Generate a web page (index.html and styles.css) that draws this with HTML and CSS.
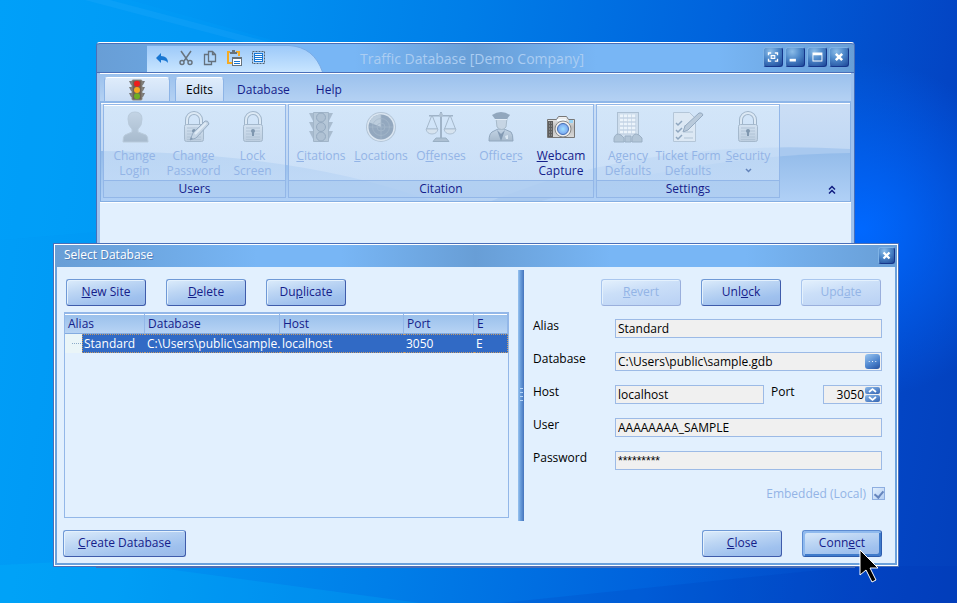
FILE: index.html
```html
<!DOCTYPE html>
<html lang="en">
<head>
<meta charset="utf-8">
<title>Traffic Database</title>
<link rel="stylesheet" href="styles.css">
</head>
<body>
<svg width="0" height="0" class="defs" aria-hidden="true">
  <defs>
    <linearGradient id="silver" x1="0" y1="0" x2="0" y2="1"><stop offset="0" stop-color="#c3d4e5"/><stop offset="1" stop-color="#a7bacd"/></linearGradient>
    <linearGradient id="pale" x1="0" y1="0" x2="0" y2="1"><stop offset="0" stop-color="#d3e2f1"/><stop offset="1" stop-color="#bccddf"/></linearGradient>
    <linearGradient id="metal" x1="0" y1="0" x2="0" y2="1"><stop offset="0" stop-color="#f4f4f4"/><stop offset=".5" stop-color="#bdbdbd"/><stop offset="1" stop-color="#d9d9d9"/></linearGradient>
    <radialGradient id="lens"><stop offset="0" stop-color="#9fe0ff"/><stop offset="1" stop-color="#79a4f0"/></radialGradient>
    <symbol id="i-lock" viewBox="0 0 32 32">
      <path d="M9 14V9a7 7 0 0 1 14 0v5" fill="none" stroke="#9fb4c9" stroke-width="4"/>
      <path d="M9 14V9a7 7 0 0 1 14 0v5" fill="none" stroke="#dce9f5" stroke-width="2"/>
      <rect x="6.500" y="13.500" width="19" height="17" rx="2" fill="url(#pale)" stroke="#a5b9cd"/>
      <path d="M9 17h14M9 20h14M9 23h14M9 26h14M9 28.500h14" stroke="#b0c3d6"/>
      <circle cx="16" cy="20" r="2" fill="#7f97af"/><path d="M15 20h2v5h-2z" fill="#7f97af"/>
    </symbol>
    <symbol id="i-pen" viewBox="0 0 32 32">
      <path d="M12 29l3-7L27 10q3-1 4 3L18 27z" fill="#c5d5e5" stroke="#96acc3"/><path d="M17 23L28 12" stroke="#e0ebf6" stroke-width="2"/><path d="M12 29l1-3 2 2z" fill="#8399b1"/>
    </symbol>
  </defs>
</svg>

<main class="desktop">
  <svg class="beams" viewBox="0 0 957 603" preserveAspectRatio="none" aria-hidden="true">
    <path d="M0 0H130L300 48 720 180 0 240z" fill="#00a8ff" opacity=".16"/>
    <path d="M110 0L280 45H255L85 0z" fill="#4fc0ff" opacity=".12"/>
    <path d="M0 565L100 560 420 603H0z" fill="#00c0ff" opacity=".18"/>
    <path d="M500 603L860 566H957V603z" fill="#0030b0" opacity=".14"/>
  </svg>

  <section class="window app" aria-label="Traffic Database">
    <header class="titlebar">
      <div class="quick">
        <svg class="quick-shape" viewBox="0 0 176 27" preserveAspectRatio="none" aria-hidden="true"><defs><linearGradient id="qa" x1="0" y1="0" x2="0" y2="1"><stop offset="0" stop-color="#9cc9f9"/><stop offset="1" stop-color="#c8e5ff"/></linearGradient></defs><path d="M0 .500H142Q167 2 175.500 27H0z" fill="url(#qa)"/><path d="M0 .500H142Q167 2 175.500 27" fill="none" stroke="#79abe5"/></svg>
        <button type="button" aria-label="Undo"><svg viewBox="0 0 16 16"><path d="M2 8L7 3v3q7 0 7 7-2-3-7-3v3z" fill="#1876d2"/></svg></button>
        <button type="button" aria-label="Cut"><svg viewBox="0 0 16 16" fill="none" stroke="#68747f" stroke-width="1.500"><path d="M3 1l7 10M13 1L6 11"/><circle cx="4" cy="12.500" r="2"/><circle cx="12" cy="12.500" r="2"/></svg></button>
        <button type="button" aria-label="Copy"><svg viewBox="0 0 16 16" fill="none" stroke="#65717d" stroke-width="1.300"><path d="M6.500 1.500h4l3 3v7h-7zM10.500 1.500v3h3M6.500 4.500h-4v10h7v-3"/></svg></button>
        <button type="button" aria-label="Paste"><svg viewBox="0 0 16 16"><path d="M4 2H2v11h4M10 2h3v4" fill="none" stroke="#f5ab24" stroke-width="2"/><path d="M4 2h2V0h3v2h2v2H4z" fill="#66727d"/><rect x="6.500" y="7.500" width="9" height="8" fill="#fff" stroke="#66727d"/><path d="M6 7h10v2H6z" fill="#66727d"/><path d="M8 11.500h6M8 13.500h6" stroke="#1876d2"/></svg></button>
        <button type="button" aria-label="Select all"><svg viewBox="0 0 16 16"><rect x="2.500" y="1.500" width="12" height="12" fill="none" stroke="#53616f" stroke-dasharray="2 1"/><rect x="4" y="3" width="9" height="9" fill="#fff"/><path d="M4 3.500h9M4 5.500h9M4 7.500h9M4 9.500h9M4 11.500h9M4.500 3v9M12.500 3v9" stroke="#1876d2"/></svg></button>
      </div>
      <h1 class="app-title">Traffic Database [Demo Company]</h1>
      <div class="controls">
        <button type="button" class="ctl" aria-label="Full screen"><svg viewBox="0 0 20 20" fill="none" stroke="#fff" stroke-width="1.500"><path d="M5 8V5.500h3M12 5.500h3V8M5 12v2.500h3M12 14.500h3V12"/><path d="M8 8.500h4v3H8z" stroke-width="1.200"/></svg></button>
        <button type="button" class="ctl" aria-label="Minimize"><svg viewBox="0 0 20 20"><path d="M4 12h7v3H4z" fill="#fff"/></svg></button>
        <button type="button" class="ctl" aria-label="Maximize"><svg viewBox="0 0 20 20"><path d="M5 5h11v10H5zM6 8v6h9V8z" fill="#fff" fill-rule="evenodd"/></svg></button>
        <button type="button" class="ctl" aria-label="Close application"><svg viewBox="0 0 20 20"><path d="M6.500 6.500l7 7M13.500 6.500l-7 7" stroke="#fff" stroke-width="2.800"/></svg></button>
      </div>
    </header>

    <div class="frame">
      <nav class="tabs" aria-label="Ribbon tabs">
        <button type="button" class="tab lit app-tab" aria-label="Application menu"><svg viewBox="0 0 22 22"><path d="M3 2h16l-2 4H5zM3 8h16l-2 4H5zM3 14h16l-2 4H5z" fill="#777"/><rect x="6" y="1" width="10" height="20" rx="1" fill="#6e6259" stroke="#8b8b86"/><circle cx="11" cy="4.800" r="3" fill="#ef1c1c"/><circle cx="11" cy="11" r="3" fill="#f5a720"/><circle cx="11" cy="17.200" r="3" fill="#6dae25"/></svg></button>
        <button type="button" class="tab lit current">Edits</button>
        <button type="button" class="tab">Database</button>
        <button type="button" class="tab">Help</button>
      </nav>

      <div class="ribbon">
        <svg class="swoosh" viewBox="0 0 748 98" preserveAspectRatio="none" aria-hidden="true">
          <defs><linearGradient id="wave" x1="0" y1="0" x2="0" y2="1"><stop offset="0" stop-color="#94bcea"/><stop offset="1" stop-color="#b0d0f6"/></linearGradient></defs>
          <path d="M0 48Q200 50 330 98H0z" fill="url(#wave)"/>
          <path d="M390 98Q540 35 748 46V98z" fill="#a9c9ef"/>
          <path d="M440 98Q600 52 748 50V98z" fill="url(#wave)"/>
        </svg>
        <section class="group users" aria-label="Users">
          <div class="items">
            <button type="button" class="item" disabled><svg viewBox="0 0 32 32"><path d="M9 8q0-7 7-7t7 7-4 10v3l8 3q2 1 2 7H4q0-6 2-7l7-3v-3q-4-3-4-10z" fill="url(#silver)" stroke="#b9cbdc"/></svg><span>Change Login</span></button>
            <button type="button" class="item" disabled><svg viewBox="0 0 32 32"><use href="#i-lock"/><use href="#i-pen"/></svg><span>Change Password</span></button>
            <button type="button" class="item" disabled><svg viewBox="0 0 32 32"><use href="#i-lock"/></svg><span>Lock Screen</span></button>
          </div>
          <h2>Users</h2>
        </section>
        <section class="group citation" aria-label="Citation">
          <div class="items">
            <button type="button" class="item" disabled><svg viewBox="0 0 32 32"><path d="M4 2h24l-4 8H8zM4 11h24l-4 8H8zM4 20h24l-4 8H8z" fill="#a9bccf"/><path d="M8.500 1.500h15v29h-15z" fill="#b5c7d8" stroke="#a1b5c9"/><g fill="#afc1d3" stroke="#95aac0"><circle cx="16" cy="6.500" r="4.500"/><circle cx="16" cy="16" r="4.500"/><circle cx="16" cy="25.500" r="4.500"/></g></svg><span><u>C</u>itations</span></button>
            <button type="button" class="item" disabled><svg viewBox="0 0 32 32"><circle cx="16" cy="16" r="15" fill="#b3c5d7"/><circle cx="16" cy="16" r="14" fill="#dbe6f1"/><circle cx="16" cy="16" r="12.500" fill="#93a8bf"/><path d="M16 16L4.500 11.500A12.500 12.500 0 0 1 16 3.500z" fill="#bccddd"/><g fill="none" stroke="#a6b9cc" stroke-width=".7"><circle cx="16" cy="16" r="4"/><circle cx="16" cy="16" r="8.500"/><path d="M4 16h24M16 4v24"/></g></svg><span><u>L</u>ocations</span></button>
            <button type="button" class="item" disabled><svg viewBox="0 0 32 32"><path d="M15 1h2v26h-2zM4 4h24v1.500H4z" fill="#9fb3c8"/><path d="M7 4L1.500 18h11zM25 4l-5.500 14h11z" fill="none" stroke="#a5b8cb"/><path d="M1 18h12q-1 5-6 5t-6-5zM19 18h12q-1 5-6 5t-6-5z" fill="#d6e3ef" stroke="#a5b8cb" stroke-width=".8"/><path d="M11 27h10l3 3.500H8z" fill="#adc0d3" stroke="#99afc4"/><circle cx="16" cy="4" r="2" fill="#afc1d3"/></svg><span>O<u>f</u>fenses</span></button>
            <button type="button" class="item" disabled><svg viewBox="0 0 32 32"><path d="M4 30q0-7 3-9l6-3h6l7 3q2 2 2 9z" fill="url(#silver)" stroke="#91a7be"/><path d="M11 7h11l-1 9q-4 5-9 0z" fill="#c6d5e4" stroke="#a7baca"/><path d="M7 4q9-6 18 0l-3 4H10z" fill="#91a7be"/><path d="M10 8h12v1H10z" fill="#e0ebf5"/><path d="M12 19l4 4 4-4-4 11z" fill="#839ab3"/><path d="M20 25l3-1v4h-2z" fill="#dae7f3"/></svg><span>Office<u>r</u>s</span></button>
            <button type="button" class="item"><svg viewBox="0 0 32 32"><path d="M2.500 8.500h9l2-3h8l2 3h6v18h-27z" fill="url(#metal)" stroke="#777"/><path d="M3 10h5v16H3z" fill="#5e5e5e"/><path d="M4 12h3M4 15h3M4 18h3M4 21h3M4 24h3" stroke="#aaa" stroke-dasharray="1 1"/><path d="M12 8h9v2h-9z" fill="#f4fbff"/><path d="M24 9h4v3h-4z" fill="#96d3f5"/><circle cx="18" cy="18" r="8" fill="#eee" stroke="#888"/><circle cx="18" cy="18" r="5.500" fill="url(#lens)" stroke="#446fb3"/></svg><span><u>W</u>ebcam Capture</span></button>
          </div>
          <h2>Citation</h2>
        </section>
        <section class="group" aria-label="Settings">
          <div class="items">
            <button type="button" class="item" disabled><svg viewBox="0 0 32 32"><rect x="5.500" y="1.500" width="21" height="29" fill="#cfdeed" stroke="#adc0d3"/><path d="M8 5h16M8 9h16M8 13h16M8 17h16M8 21h16" stroke="#ecf4fb" stroke-width="3" stroke-dasharray="3 1"/><path d="M8 7h16M8 11h16M8 15h16M8 19h16M8 23h16" stroke="#b4c6d8" stroke-width=".7"/><path d="M2 27q2-6 7-3l3 3v4H2zM20 27q2-6 7-3l3 3v4H20zM13 25h6v6h-6z" fill="#b2c5d7" stroke="#9bb0c5"/></svg><span>Agency Defaults</span></button>
            <button type="button" class="item wide" disabled><svg viewBox="0 0 32 32"><path d="M1.500 1.500h16l6 6v23h-22z" fill="#dce8f4" stroke="#b4c6d8"/><path d="M4 12l2 2 4-4M4 19l2 2 4-4M4 26l2 2 4-4" fill="none" stroke="#8ea6bf" stroke-width="1.500"/><path d="M12 15h8M12 21h9M12 27h9" stroke="#b0c3d5"/><path d="M11 21l2-6L27 2q3-1 4 2L16 19z" fill="#b9cadb" stroke="#94aac1"/></svg><span>Ticket Form Defaults</span></button>
            <button type="button" class="item" disabled><svg viewBox="0 0 32 32"><use href="#i-lock"/></svg><span><u>S</u>ecurity</span><svg class="caret" viewBox="0 0 7 7"><path d="M1 2l2.500 2.500L6 2" fill="none" stroke="#6384bb" stroke-width="1.500"/></svg></button>
          </div>
          <h2>Settings</h2>
        </section>
        <button type="button" class="collapse" aria-label="Collapse ribbon"><svg viewBox="0 0 8 10" fill="none" stroke="#101c80" stroke-width="1.500"><path d="M1 4.500l3-3 3 3M1 8.500l3-3 3 3"/></svg></button>
      </div>
    </div>
  </section>

  <section class="window dialog" role="dialog" aria-labelledby="dialog-title">
    <header class="dialog-bar">
      <h2 id="dialog-title">Select Database</h2>
      <button type="button" class="ctl" aria-label="Close dialog"><svg viewBox="0 0 20 20"><path d="M6 6l8 8M14 6l-8 8" stroke="#fff" stroke-width="3"/></svg></button>
    </header>
    <div class="panes">
      <div class="sites">
        <div class="row">
          <button type="button" class="btn"><u>N</u>ew Site</button>
          <button type="button" class="btn"><u>D</u>elete</button>
          <button type="button" class="btn">Du<u>p</u>licate</button>
        </div>
        <div class="list">
          <table>
            <colgroup><col class="c-alias"><col class="c-db"><col class="c-host"><col class="c-port"><col></colgroup>
            <thead><tr><th>Alias</th><th>Database</th><th>Host</th><th>Port</th><th>E</th></tr></thead>
            <tbody><tr><td class="node">Standard</td><td>C:\Users\public\sample.</td><td>localhost</td><td>3050</td><td>E</td></tr></tbody>
          </table>
        </div>
      </div>
      <div class="splitter" role="separator"><span></span></div>
      <form class="details">
        <div class="row end">
          <button type="button" class="btn" disabled><u>R</u>evert</button>
          <button type="button" class="btn">Unl<u>o</u>ck</button>
          <button type="button" class="btn" disabled>Upd<u>a</u>te</button>
        </div>
        <div class="fields">
          <div class="field"><label for="alias">Alias</label><input id="alias" type="text" value="Standard" readonly></div>
          <div class="field"><label for="database">Database</label><div class="box"><input id="database" type="text" value="C:\Users\public\sample.gdb" readonly><button type="button" class="browse" aria-label="Browse"><svg viewBox="0 0 16 16"><path d="M4 8h1M7.500 8h1M11 8h1" stroke="#fff"/></svg></button></div></div>
          <div class="field"><label for="host">Host</label><input id="host" type="text" value="localhost" readonly><label class="port-label" for="port">Port</label><div class="box port"><input id="port" type="number" value="3050" readonly><span class="spin"><button type="button" aria-label="Increase port"><svg viewBox="0 0 15 7"><path d="M4 5l3.500-3L11 5" fill="none" stroke="#fff" stroke-width="1.700"/></svg></button><button type="button" aria-label="Decrease port"><svg viewBox="0 0 15 7"><path d="M4 2l3.500 3L11 2" fill="none" stroke="#fff" stroke-width="1.700"/></svg></button></span></div></div>
          <div class="field"><label for="user">User</label><input id="user" type="text" value="AAAAAAAA_SAMPLE" readonly></div>
          <div class="field"><label for="password">Password</label><input id="password" class="masked" type="text" value="*********" readonly></div>
        </div>
        <div class="embedded"><label for="embedded">Embedded (Local)</label><input id="embedded" type="checkbox" checked disabled></div>
      </form>
    </div>
    <footer class="actions">
      <button type="button" class="btn create"><u>C</u>reate Database</button>
      <button type="button" class="btn"><u>C</u>lose</button>
      <div class="pointed">
        <button type="button" class="btn default">Conn<u>e</u>ct</button>
        <svg class="cursor" viewBox="0 0 20 34" aria-hidden="true"><path d="M1 1v25l6-5 6 12 4-2-6-12h8z" fill="#000" stroke="#fff"/></svg>
      </div>
    </footer>
  </section>
</main>
</body>
</html>
```
FILE: styles.css
```css
:root {
  --navy: #14208a;
  --faded: #93b4e6;
  --line: #93b7e8;
  --pane: #e2f0fe;
  --edge: #4a6fb8;
  --bar: linear-gradient(90deg, #689ed6 0%, #6ba4de 8%, #78b6f5 24%, #78b6f5 34%, #689ed6 50%, #78b6f5 66%, #78b6f5 82%, #689ed6 100%);
}

* { box-sizing: border-box; }

body {
  margin: 0;
  color: #000;
  font: 12px/15px "Open Sans", "Noto Sans", sans-serif;
}

button, input { font: inherit; color: inherit; }
button { margin: 0; padding: 0; border: 0; background: none; }
h1, h2 { margin: 0; font-weight: 400; }
svg { display: block; }
.defs { position: absolute; }

.desktop {
  position: relative;
  min-height: 100vh;
  overflow: hidden;
  background:
    radial-gradient(circle at 90% 38%, #0068ff 0, rgba(0, 98, 250, 0) 18%),
    linear-gradient(98deg, #009ff8 0%, #0097f4 18%, #007ee8 45%, #0062dc 70%, #0345c4 92%, #0340bc 100%);
}
.beams { position: absolute; inset: 0; width: 100%; height: 100%; }

.window { position: absolute; display: flex; flex-direction: column; }

/* Application window */
.app {
  top: 42px;
  right: 102px;
  bottom: 35px;
  left: 96px;
  border: 1px solid var(--edge);
  border-top-color: #fff;
  border-bottom-width: 2px;
  border-radius: 4px 4px 0 0;
  background: #9dc1ee;
}
.titlebar {
  display: flex;
  height: 30px;
  padding: 1px 5px 0 50px;
  border-top: 1px solid var(--edge);
  border-bottom: 1px solid var(--edge);
  border-radius: 3px 3px 0 0;
  background: var(--bar);
}
.quick { position: relative; display: flex; gap: 8px; width: 176px; padding: 5px 7px; }
.quick svg { width: 16px; height: 16px; }
.quick button { position: relative; width: 16px; height: 16px; }
.quick .quick-shape { position: absolute; inset: 0; width: 176px; height: 27px; }
.app-title { flex: 1; padding-left: 37px; color: #abcdf2; font-size: 14px; line-height: 27px; white-space: nowrap; }
.controls { display: flex; gap: 2px; padding-top: 2px; }
.ctl {
  width: 20px;
  height: 20px;
  border: 1px solid #315a9f;
  border-color: #7fb3e6 #15358a #15358a #7fb3e6;
  border-radius: 3px;
  background: radial-gradient(circle at 35% 20%, #8bbce8 0, #4c87c9 45%, #1c4697 100%);
}
.ctl svg { width: 100%; height: 100%; }

.frame {
  flex: 1;
  margin: 0 3px;
  border-top: 1px solid #fff;
  background: var(--pane);
}
.tabs {
  display: flex;
  height: 27px;
  padding: 3px 4px 0;
  background: linear-gradient(#9bc1ed, #b4d1f3);
}
.tab { padding: 0 13px; color: var(--navy); }
.tab.lit {
  border: 1px solid #8db4e6;
  border-top-color: #fff;
  border-bottom: 0;
  border-radius: 4px 4px 0 0;
  background: linear-gradient(#dfecfb, #c9ddf5);
}
.tab.app-tab { width: 66px; margin-right: 5px; padding: 0 21px; }
.tab.app-tab svg { width: 22px; height: 22px; }
.tab.current { padding: 0 10px; color: #000; }

.ribbon {
  position: relative;
  display: flex;
  gap: 2px;
  height: 101px;
  padding: 1px 2px 3px;
  border: 1px solid #84aee2;
  border-top: 2px solid #8eb6e8;
  background: linear-gradient(#cbdef5, #b6d2f3);
  box-shadow: inset 0 1px #fff, 0 1px #fff;
}
.swoosh { position: absolute; inset: 0; width: 100%; height: 100%; }
.group {
  position: relative;
  display: flex;
  flex-direction: column;
  border: 1px solid var(--line);
  box-shadow: inset 0 1px #fff;
  background: linear-gradient(rgba(214, 233, 250, .7), rgba(214, 230, 250, .5));
}
.items { display: flex; flex: 1; padding: 6px 1px 0; }
.item { display: flex; flex-direction: column; align-items: center; width: 60px; color: var(--navy); text-align: center; }
.item svg { width: 32px; height: 32px; margin-bottom: 5px; }
.item .caret { width: 7px; height: 7px; margin: 4px 0 0; }
.item.wide span { margin: 0 -4px; }
.item:disabled { color: var(--faded); }
.users .items { padding-right: 3px; }
.users .item { width: 59px; }
.citation .items { padding: 6px 2px 0; }
.group h2 {
  height: 17px;
  border-top: 1px solid var(--line);
  background: rgba(164, 198, 239, .6);
  color: var(--navy);
  font-size: 12px;
  line-height: 15px;
  text-align: center;
}
.collapse { position: relative; align-self: flex-end; margin: 0 12px 3px auto; }
.collapse svg { width: 8px; height: 10px; }

/* Database picker */
.dialog {
  top: 243px;
  right: 58px;
  left: 53px;
  border: 1px solid var(--edge);
  padding: 1px;
  background: #fff;
}
.dialog-bar {
  display: flex;
  align-items: flex-start;
  justify-content: space-between;
  height: 22px;
  padding: 2px 2px 0 9px;
  background: var(--bar);
}
.dialog-bar h2 { color: #fff; font-size: 12px; line-height: 16px; text-shadow: 1px 1px #527fb9; }
.dialog-bar .ctl { width: 17px; height: 17px; }
.panes { display: flex; padding-top: 3px; border: solid #6ba1dc; border-width: 0 2px; background: var(--pane); }
.sites { display: flex; flex: 1 1 461px; flex-direction: column; min-width: 0; padding: 9px 9px 3px 7px; }
.row { display: flex; gap: 20px; padding: 0 2px; }
.row.end { justify-content: flex-end; padding: 0 4px; }

.btn {
  width: 80px;
  height: 27px;
  padding-bottom: 2px;
  border: 1px solid #3f5fae;
  border-color: #6f99d6 #3f5cab #3f5cab #6f99d6;
  border-radius: 3px;
  background: linear-gradient(170deg, #dcecfb 0%, #bdd6f4 35%, #9fc1ee 75%, #9ab9e8 100%);
  box-shadow: inset 1px 1px #e4f1fd;
  color: var(--navy);
}
.btn:disabled { border-color: #a9c6ee #9aafdc #9aafdc #a9c6ee; background: linear-gradient(170deg, #e4f1fd, #cbdff8 40%, #b9d1f4); color: var(--faded); }
.btn.create { width: 123px; margin-right: auto; }
.btn.default { border-color: #5c8bd2 #2c5cae #2c5cae #5c8bd2; box-shadow: inset 2px 2px #8fbaee, inset -2px -2px #3f7bcb; }

.list { flex: 1; min-height: 206px; margin-top: 6px; border: 1px solid var(--line); background: var(--pane); }
table { width: 100%; border-spacing: 0; table-layout: fixed; }
.c-alias { width: 80px; }
.c-db { width: 135px; }
.c-host { width: 124px; }
.c-port { width: 70px; }
th, td { overflow: hidden; padding: 0 0 0 3px; text-align: left; font-weight: 400; white-space: nowrap; }
th {
  height: 21px;
  border: 1px solid var(--line);
  border-left: 0;
  border-bottom-color: #84abe0;
  background: linear-gradient(#fff 1px, #9bc1ec 1px, #b7d3f4);
  color: var(--navy);
}
td { height: 19px; padding-left: 2px; border: dotted #c59b66; border-width: 1px 0; background: #316ac5; color: #fff; }
td:last-child { border-right-width: 1px; }
td.node {
  padding-left: 19px;
  border: 0;
  background:
    repeating-linear-gradient(90deg, #8caac8 0 1px, transparent 1px 2px) 7px 9px / 10px 1px no-repeat,
    repeating-linear-gradient(90deg, #c59b66 0 1px, transparent 1px 2px) 17px 0 / 100% 1px no-repeat,
    repeating-linear-gradient(90deg, #c59b66 0 1px, transparent 1px 2px) 17px 100% / 63px 1px no-repeat,
    repeating-linear-gradient(#c59b66 0 1px, transparent 1px 2px) 17px 0 / 1px 100% no-repeat,
    linear-gradient(90deg, #eaf5f8 17px, #316ac5 17px);
}

.splitter {
  display: flex;
  flex: none;
  align-items: center;
  justify-content: center;
  width: 6px;
  background: linear-gradient(90deg, #9ac4f0, #6b9fdc 40%, #4474bd);
}
.splitter span { width: 3px; height: 15px; background: repeating-linear-gradient(#b7d6f7 0 1px, transparent 1px 4px); }

.details { display: flex; flex: 1 1 371px; flex-direction: column; min-width: 0; padding: 9px 10px 0 9px; }
.fields { display: grid; grid-template-columns: minmax(0, 1fr); gap: 14px; margin-top: 13px; padding-right: 3px; }
.field { display: flex; }
.field label { flex: none; width: 82px; line-height: 13px; }
.field .port-label { width: 59px; padding-left: 7px; }
.field > input, .box { flex: 1; min-width: 0; height: 19px; border: 1px solid #9cbae6; background: #f0f0f0; }
.field input { min-width: 0; padding: 0 2px; outline: 0; }
.field .masked { font-family: "Liberation Sans", Arial, sans-serif; }
.box { display: flex; align-items: center; padding-right: 1px; }
.box input { flex: 1; width: 0; height: 17px; border: 0; background: none; }
.box.port { flex: none; width: 59px; }
.port input { appearance: textfield; padding: 0 1px; text-align: right; }
.port input::-webkit-inner-spin-button { display: none; }
.browse { width: 15px; height: 15px; border-radius: 3px; background: linear-gradient(150deg, #9bc7f2, #4b82cc 60%, #25509f); }
.browse svg { width: 15px; height: 15px; }
.spin { display: grid; gap: 1px; width: 15px; }
.spin button { height: 7px; border-radius: 2px; background: linear-gradient(160deg, #8bb9ea, #3565b3); }
.spin svg { width: 15px; height: 7px; }
.embedded { display: flex; align-items: center; justify-content: flex-end; gap: 6px; margin-top: 16px; color: var(--faded); }
.embedded input {
  display: grid;
  place-items: center;
  appearance: none;
  width: 13px;
  height: 13px;
  margin: 0;
  border: 1px solid #8eaee0;
  background: linear-gradient(135deg, #e1effd, #b6cff2);
}
.embedded input::before { content: ""; width: 4px; height: 7px; border: solid #6685bd; border-width: 0 2px 2px 0; transform: rotate(40deg); }

.actions { display: flex; gap: 20px; padding: 9px 13px 6px 6px; border: 2px solid #6ba1dc; border-top: 0; background: var(--pane); }
.pointed { position: relative; }
.cursor { position: absolute; top: 19px; left: 57px; width: 20px; height: 34px; }
```
